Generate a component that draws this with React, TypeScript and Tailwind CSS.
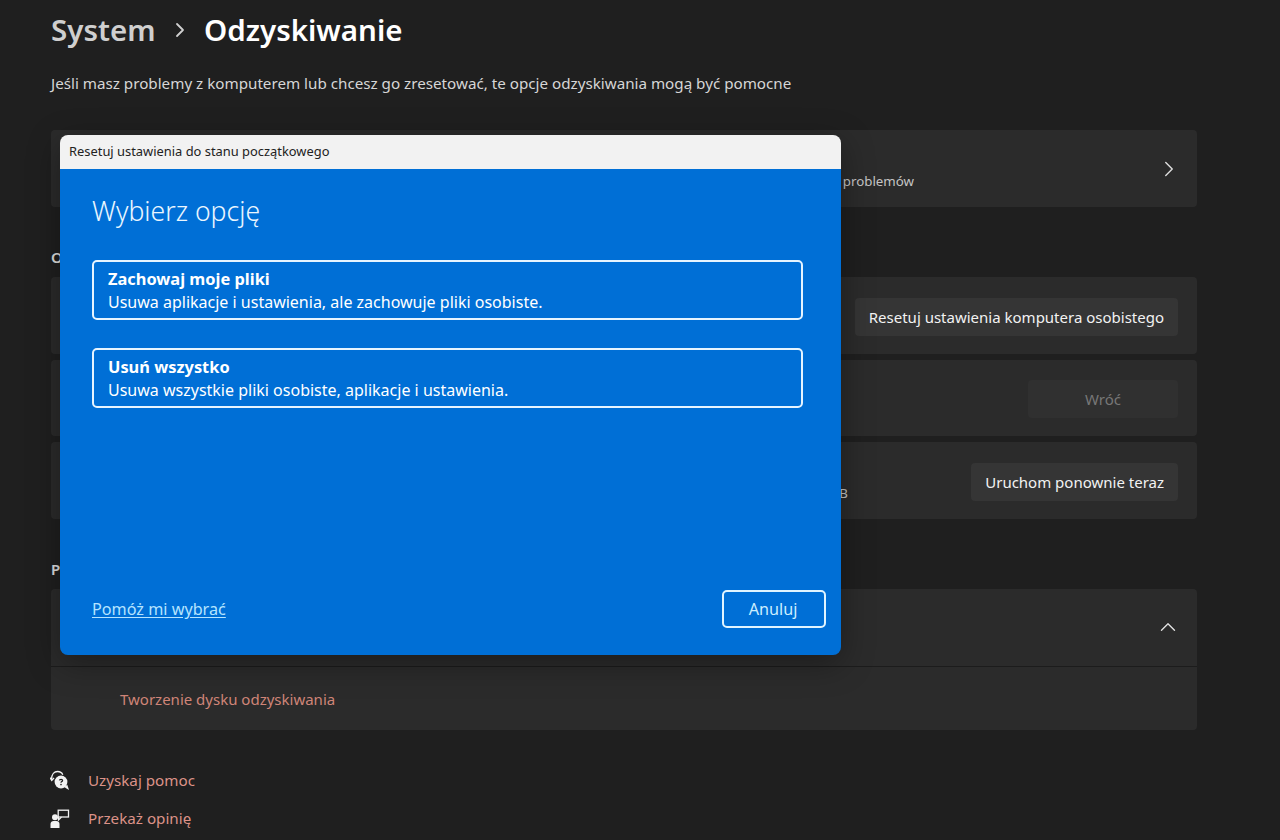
import { ChevronRight, ChevronUp } from "lucide-react";

const font = "font-['Noto_Sans','Open_Sans',sans-serif]";

function SettingCard({
  note,
  action,
  muted,
}: {
  note?: string;
  action: string;
  muted?: boolean;
}) {
  return (
    <div className="flex h-[76.5px] items-center justify-between rounded-[4px] bg-[#2b2b2b] pl-[52px] pr-[19px] pt-[3px]">
      <div className="mt-[22px] h-[20px] w-[745px] text-right text-[13.300px] leading-[20px] text-[#c5c5c5]">
        {note}
      </div>
      <button
        className={
          muted
            ? "flex h-[38px] w-[150px] items-center justify-center rounded-[4px] bg-[#303030] text-[15px] text-[#777777]"
            : "flex h-[38px] items-center whitespace-nowrap rounded-[4px] bg-[#353535] px-[14px] text-[15px] text-[#f2f2f2]"
        }
      >
        {action}
      </button>
    </div>
  );
}

function OptionButton({ title, text }: { title: string; text: string }) {
  return (
    <button className="flex h-[60px] w-[711px] flex-col justify-center rounded-[5px] border-2 border-[#e6f4ff] pl-[14px] pt-[2px] text-left text-white">
      <span className="text-[16.400px] font-bold leading-[21px]">{title}</span>
      <span className="mt-[2px] text-[16px] leading-[23px]">{text}</span>
    </button>
  );
}

function HelpIcon() {
  return (
    <svg width="20" height="22" viewBox="0 0 20 22" fill="none" className="-ml-[1px]">
      <path d="M1.500 9.500C1.500 4 4.500 1.500 7.500 1.500c2.500 0 4.500 1.300 5.300 3.200" stroke="#f2f2f2" strokeWidth="1.300" />
      <path d="M0 7.500 1.700 10.500 4 8" stroke="#f2f2f2" strokeWidth="1.300" />
      <circle cx="11" cy="12" r="6.400" fill="#f2f2f2" />
      <path d="M14 17l5 3-1.700-5.300z" fill="#f2f2f2" />
      <path d="M9.400 10.400c.2-1.500 3.200-1.500 3.200 0 0 1.200-1.600 1.200-1.600 2.300" stroke="#1f1f1f" strokeWidth="1.200" />
      <circle cx="11" cy="14.600" r=".8" fill="#1f1f1f" />
    </svg>
  );
}

function FeedbackIcon() {
  return (
    <svg width="20" height="20" viewBox="0 0 20 20" fill="none" className="-ml-[1px]">
      <rect x="8.200" y="1.200" width="10.300" height="6.800" stroke="#f2f2f2" strokeWidth="1.300" />
      <path d="M8.500 8v3l3-3" stroke="#f2f2f2" strokeWidth="1.200" />
      <circle cx="5" cy="8.200" r="3" fill="#f2f2f2" />
      <path d="M0.500 19v-4c0-2 1.500-3 3-3h3c1.500 0 3 1 3 3v4z" fill="#f2f2f2" />
    </svg>
  );
}

export default function App() {
  return (
    <div className={`relative h-[840px] w-[1280px] overflow-hidden bg-[#1f1f1f] pl-[51px] ${font}`}>
      <div className="w-[1146px]">
        <div className="flex h-[60px] items-center">
          <span className="text-[29.500px] font-semibold text-[#cfcfcf]">System</span>
          <ChevronRight className="ml-[12.500px] mr-[12px] h-[24px] w-[24px] text-[#cfcfcf]" strokeWidth={1.800} />
          <span className="text-[29.500px] font-semibold text-white">Odzyskiwanie</span>
        </div>
        <p className="mt-[12px] text-[15.200px] leading-[22px] text-[#d6d6d6]">
          Jeśli masz problemy z komputerem lub chcesz go zresetować, te opcje odzyskiwania mogą być pomocne
        </p>

        <div className="mt-[36px] flex h-[77px] items-center justify-between rounded-[4px] bg-[#2b2b2b] pl-[52px] pr-[15px]">
          <div className="mt-[25px] h-[20px] w-[811px] text-right text-[13.300px] leading-[20px] text-[#c5c5c5]">
            problemów
          </div>
          <ChevronRight className="h-[26px] w-[26px] text-[#dedede]" strokeWidth={1.300} />
        </div>

        <h2 className="mt-[40px] text-[15px] font-semibold leading-[20px] text-[#e0e0e0]">Opcje odzyskiwania</h2>
        <div className="mt-[10px] flex flex-col gap-[6px]">
          <SettingCard action="Resetuj ustawienia komputera osobistego" />
          <SettingCard action="Wróć" muted />
          <SettingCard note="USB" action="Uruchom ponownie teraz" />
        </div>

        <h2 className="mt-[40px] text-[15px] font-semibold leading-[20px] text-[#e0e0e0]">Powiązana pomoc</h2>
        <div className="mt-[10px] overflow-hidden rounded-[4px] bg-[#2b2b2b]">
          <div className="flex h-[78px] items-center justify-end border-b border-[#1c1c1c] pr-[16px]">
            <ChevronUp className="h-[26px] w-[26px] text-[#dedede]" strokeWidth={1.300} />
          </div>
          <div className="flex h-[63px] items-center pl-[69px] pt-[2px] text-[15px] text-[#d08578]">
            Tworzenie dysku odzyskiwania
          </div>
        </div>

        <div className="mt-[40px] flex flex-col gap-[16px]">
          <a className="flex h-[22px] items-center gap-[18px] text-[15.200px] text-[#dc9288]">
            <HelpIcon />
            Uzyskaj pomoc
          </a>
          <a className="flex h-[22px] items-center gap-[18px] text-[15.200px] text-[#dc9288]">
            <FeedbackIcon />
            Przekaż opinię
          </a>
        </div>
      </div>

      <div className="absolute left-[60px] top-[135px] flex h-[520px] w-[781px] flex-col overflow-hidden rounded-[8px] shadow-[0_8px_32px_rgba(0,0,0,0.35)]">
        <div className="flex h-[34px] shrink-0 items-center bg-[#f2f2f2] pl-[9px] text-[12.900px] text-[#222222]">
          Resetuj ustawienia do stanu początkowego
        </div>
        <div className="flex flex-1 flex-col bg-[#006fd6] pl-[32px] pr-[15px] pb-[27px]">
          <h1 className="mt-[21px] text-[26.600px] font-light leading-[42px] text-[#eaf6ff]">Wybierz opcję</h1>
          <div className="mt-[28px] flex flex-col gap-[28px]">
            <OptionButton title="Zachowaj moje pliki" text="Usuwa aplikacje i ustawienia, ale zachowuje pliki osobiste." />
            <OptionButton title="Usuń wszystko" text="Usuwa wszystkie pliki osobiste, aplikacje i ustawienia." />
          </div>
          <div className="mt-auto flex items-center justify-between">
            <a className="pt-[1px] text-[16.200px] text-[#b5e4ff] underline underline-offset-2">Pomóż mi wybrać</a>
            <button className="h-[38px] w-[104px] rounded-[5px] border-[2.500px] border-[#e0f4ff] pr-[2px] text-[16.200px] text-[#cdeeff]">
              Anuluj
            </button>
          </div>
        </div>
      </div>
    </div>
  );
}
